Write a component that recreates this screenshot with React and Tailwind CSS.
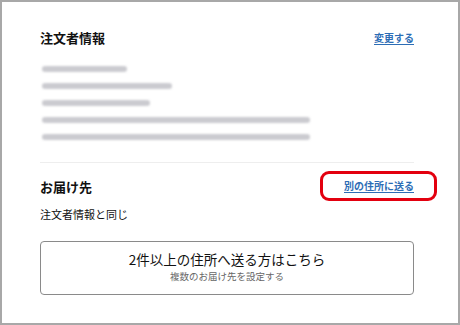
export default function App() {
  const font = { fontFamily: '"Noto Sans CJK JP", "Noto Sans", sans-serif' };
  const bars = [85, 130, 108, 268, 268];
  return (
    <div
      className="w-[460px] h-[325px] bg-white border-2 border-[#a8a8a8] pl-[38px] pr-[44px] pt-[27px] text-[#111]"
      style={font}
    >
      <div className="flex justify-between items-center h-[18px]">
        <div className="text-[13px] font-bold leading-[18px]">注文者情報</div>
        <a className="text-[10px] font-bold leading-[14px] text-[#2d6db5] underline underline-offset-2">
          変更する
        </a>
      </div>
      <div className="mt-[13px] flex flex-col">
        {bars.map((w, i) => (
          <div key={i} className="h-[17px] flex items-center pl-[2px]">
            <div
              className="h-[6px] rounded-sm bg-[#cbcbd0] blur-[1px]"
              style={{ width: w }}
            />
          </div>
        ))}
      </div>
      <div className="mt-[17px] h-px bg-[#eeeeee]" />
      <div className="mt-[15px] flex justify-between items-center h-[18px]">
        <div className="text-[13px] font-bold leading-[18px]">お届け先</div>
        <div className="relative flex mb-[3px]">
          <a className="text-[10px] font-bold leading-[14px] text-[#2d6db5] underline underline-offset-2">
            別の住所に送る
          </a>
          <div className="absolute left-[-24px] right-[-23px] top-[-8px] bottom-[-8px] border-[3px] border-[#e3000f] rounded-[9px]" />
        </div>
      </div>
      <div className="mt-[10px] text-[11px] leading-[16px]">注文者情報と同じ</div>
      <div className="mt-[19px] h-[54px] pb-[3px] border-[1.5px] border-[#8a8a8a] rounded-[4px] flex flex-col items-center justify-center">
        <div className="text-[13.5px] leading-[16px] text-[#111]">2件以上の住所へ送る方はこちら</div>
        <div className="mt-[3px] text-[9.5px] leading-[12px] text-[#666]">複数のお届け先を設定する</div>
      </div>
    </div>
  );
}
